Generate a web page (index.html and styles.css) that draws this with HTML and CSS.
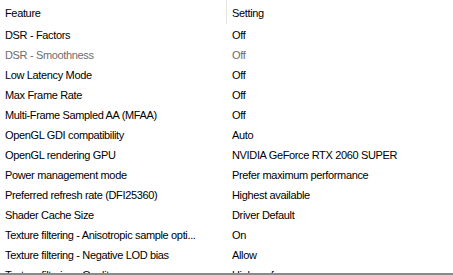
FILE: index.html
```html
<!DOCTYPE html>
<html lang="en">
<head>
  <meta charset="UTF-8" />
  <title>Manage 3D settings</title>
  <link rel="stylesheet" href="styles.css">
</head>
<body>
  <div class="list">
    <div class="head">
      <div class="col feature">Feature</div>
      <div class="col setting">Setting</div>
    </div>
    <div class="rows">
      <div class="row"><span class="feature">DSR - Factors</span><span class="setting">Off</span></div>
      <div class="row disabled"><span class="feature">DSR - Smoothness</span><span class="setting">Off</span></div>
      <div class="row"><span class="feature">Low Latency Mode</span><span class="setting">Off</span></div>
      <div class="row"><span class="feature">Max Frame Rate</span><span class="setting">Off</span></div>
      <div class="row"><span class="feature">Multi-Frame Sampled AA (MFAA)</span><span class="setting">Off</span></div>
      <div class="row"><span class="feature">OpenGL GDI compatibility</span><span class="setting">Auto</span></div>
      <div class="row"><span class="feature">OpenGL rendering GPU</span><span class="setting">NVIDIA GeForce RTX 2060 SUPER</span></div>
      <div class="row"><span class="feature">Power management mode</span><span class="setting">Prefer maximum performance</span></div>
      <div class="row"><span class="feature">Preferred refresh rate (DFI25360)</span><span class="setting">Highest available</span></div>
      <div class="row"><span class="feature">Shader Cache Size</span><span class="setting">Driver Default</span></div>
      <div class="row"><span class="feature">Texture filtering - Anisotropic sample opti...</span><span class="setting">On</span></div>
      <div class="row"><span class="feature">Texture filtering - Negative LOD bias</span><span class="setting">Allow</span></div>
      <div class="row"><span class="feature">Texture filtering - Quality</span><span class="setting">High performance</span></div>
    </div>
  </div>
</body>
</html>
```

FILE: styles.css
```css
body { margin:0; background:#fff; font-family:"Liberation Sans", Arial, sans-serif; font-size:11px; letter-spacing:-0.35px; color:#000; }
.list { height:275px; display:flex; flex-direction:column; overflow:hidden; }
.head { height:24px; display:flex; flex:none; }
.head .col { height:24px; line-height:26px; }
.head .feature { width:221px; padding-left:5px; border-right:1px solid #e5e5e5; }
.head .setting { padding-left:5px; }
.rows { flex:1; overflow:hidden; border-bottom:2px solid #8a8a8a; }
.row { height:20px; line-height:22px; display:flex; white-space:nowrap; }
.row .feature { width:222px; padding-left:5px; flex:none; overflow:hidden; }
.row .setting { padding-left:5px; }
.row.disabled { color:#6d6d6d; }
```
